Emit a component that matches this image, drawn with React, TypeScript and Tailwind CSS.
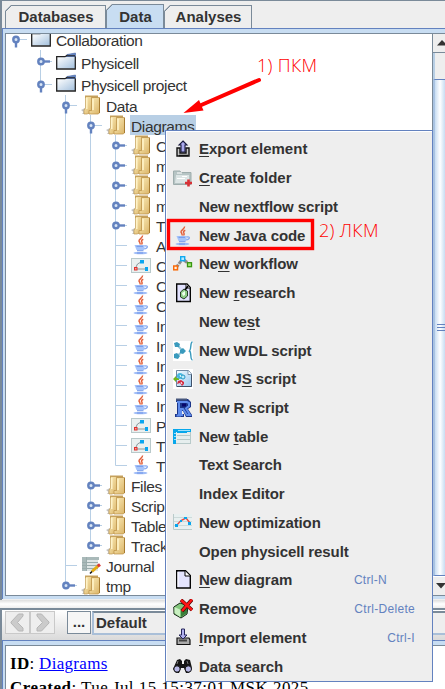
import type { ReactNode } from "react";

const LINE = "#b8cfe5";
const BLUE = "#6382bf";

type IconName =
  | "folder" | "yellow" | "java" | "diagram" | "journal" | "export" | "createFolder" | "workflow"
  | "research" | "wdl" | "js" | "r" | "table" | "optimization" | "page" | "remove" | "import" | "search";

const art: Record<IconName, ReactNode> = {
  folder: (
    <g>
      <path d="M10 5 L11 2.5 L19.5 1 V5Z" fill="#6382bf" stroke="#4d6ba8" strokeWidth=".6" />
      <rect x="1" y="5" width="18" height="11.5" fill="url(#fold)" />
      <path d="M19.3 4.5 V17 H.7 V4.7 H9 L11 3.5 H19" fill="none" stroke="#222" strokeWidth="1.3" />
      <path d="M11.5 2.4 L19.5 1.2 V3.2 H11Z" fill="#6382bf" />
    </g>
  ),
  yellow: (
    <g>
      <path d="M0 15 L4 13 V19 H1 L2.5 17Z" fill="#c4c4c4" />
      <path d="M4 .5 H17 V3 H4Z" fill="#c5a05c" />
      <path d="M4.5 1.5 H11 V17 L6 19 H3 V15 L4.5 13Z" fill="url(#gold)" stroke="#bd954d" strokeWidth=".7" />
      <path d="M10.5 2.5 H18.5 V18 L17 19 H8 V15.5 H10.5Z" fill="url(#gold)" stroke="#b98e44" strokeWidth=".7" />
      <path d="M5.7 3 V14 M12 4 V15" stroke="#fff3c8" strokeWidth="1.6" />
      <path d="M18.5 3 V18" stroke="#a77c32" />
    </g>
  ),
  java: (
    <g fill="none">
      <path d="M11.5 .5 C12 3 7.5 4 8 6 C8.3 7.2 9.7 8 9 9.5 M12.3 4.3 C10.5 5 10 6 11 7.3 C11.4 8.3 11 9 10.5 9.5" stroke="#e2603c" strokeWidth="1.5" />
      <path d="M3.5 10 H14 L13 15 H5.5Z" fill="#a5c3fa" />
      <path d="M14 11 C17.5 10 17 13.7 13.2 13.7" stroke="#8aacf0" strokeWidth="1.4" />
      <path d="M5.5 11.3 H12 M6 15.7 H12.5" stroke="#7196e8" strokeWidth="1" />
      <ellipse cx="9.5" cy="18" rx="7" ry="1.3" fill="#a0bdf7" />
      <path d="M6 18 H12" stroke="#7196e8" />
    </g>
  ),
  diagram: (
    <g>
      <rect x=".5" y="3.5" width="19" height="14" fill="#e9f0f0" stroke="#b9c9ca" />
      <path d="M4.5 13 L6.5 9 L10 7 M5 14 H15" fill="none" stroke="#87989b" />
      <path d="M9 5 H13 V8.5 H9Z M14 12 H17 V16 H14Z" fill="#08a5ef" />
      <rect x="3.5" y="12.5" width="2.5" height="2.5" fill="#f7a29b" stroke="#e0302d" />
    </g>
  ),
  journal: (
    <g>
      <path d="M1 2 H17 V16 H1Z" fill="#dfe6e6" />
      <path d="M1 2 H18 V5 H1Z M1 5 H5 V16 H1Z" fill="#a9b9b9" />
      <path d="M1 7.5 H17 M1 10.5 H17 M1 13.5 H17 M5.5 2 V16" stroke="#9aacac" />
      <path d="M11 16.5 L17 11" stroke="#e3ab12" strokeWidth="3" />
      <path d="M16.7 11.3 L19 9.5" stroke="#d83b37" strokeWidth="3" />
      <path d="M9 18.5 L11 16.5" stroke="#111" strokeWidth="1.6" />
    </g>
  ),
  export: (
    <g>
      <path d="M4 9 H7 V14 H13 V9 H16 V17 H4Z" fill="#c5c5c5" stroke="#111" strokeWidth="1.4" />
      <path d="M10 2 L14 6 H12 V13 H8 V6 H6Z" fill="#a9a9ec" stroke="#17173c" strokeWidth="1.1" />
      <path d="M6 16.5 H15" stroke="#111" strokeWidth="1.5" />
    </g>
  ),
  createFolder: (
    <g>
      <path d="M.5 3 H7 L8 4.5 H18 V16.5 H.5Z" fill="#b6c4c4" stroke="#9eadad" />
      <path d="M3 7 H16 V15 H2Z" fill="#dce5e5" />
      <path d="M4 5 H9 M9 8.5 H14 M4 10.5 H12" stroke="#fff" />
      <path d="M15.5 11.5 V18.5 M12 15 H19" stroke="#d83035" strokeWidth="2.6" />
    </g>
  ),
  workflow: (
    <g>
      <path d="M3 14 L8 7 M11 6 L16 10" stroke="#8c8c8c" strokeWidth="3" strokeDasharray="4 1" />
      <rect x="7.7" y="2.7" width="4" height="4" fill="#b9eafe" stroke="#10aaf1" strokeWidth="1.4" />
      <rect x=".7" y="12" width="3.8" height="3.8" fill="#fff0df" stroke="#fa6a08" strokeWidth="1.5" />
      <rect x="14.5" y="8.7" width="4" height="4" fill="#a5e77c" stroke="#38960f" strokeWidth="1.3" />
    </g>
  ),
  research: (
    <g>
      <path d="M3.7 1 H14 L17.3 4.5 V18.5 H3.7Z" fill="#e2e2ff" stroke="#050505" strokeWidth="1.4" />
      <path d="M13 1 V5 H17" fill="#fff" stroke="#111" />
      <path d="M7.5 9 L11 6 L14.5 8 V13 L11 16 L7.5 14Z" fill="#8dcc88" stroke="#1a301b" strokeWidth=".9" />
      <path d="M9 10 L12 8 V12 L10 13Z" fill="#effff0" />
      <path d="M12 7 L15 3" stroke="#000" strokeWidth="1.5" />
    </g>
  ),
  wdl: (
    <g>
      <rect width="20" height="20" fill="#fff" />
      <path d="M4 4 L10 10 L4 15" fill="none" stroke="#91c5d8" strokeWidth="2" />
      <path d="M1 2 L4 1 L7 3 L6 6 L2 6Z M7 9 L10 7 L13 10 L10 13 L7 12Z M1 13 L4 12 L7 15 L5 18 L1 17Z" fill="#399abd" />
      <path d="M19.5 1 C16.8 1 18.8 8 16.5 10 C18.8 11 16.8 19 19.5 19" fill="none" stroke="#399abd" strokeWidth="1.4" />
    </g>
  ),
  js: (
    <g>
      <rect width="20" height="20" fill="#fff" />
      <path d="M3.5 1.5 H15.5 L18.5 5 V17.5 H3.5Z" fill="url(#sky)" stroke="#6e87a3" />
      <path d="M4 17.5 H18.5 V5" fill="none" stroke="#3f5169" />
      <path d="M15 1.5 V5.5 H18.5" fill="#fff" stroke="#66819d" strokeWidth=".8" />
      <path d="M0 10 L3 7 V9 H6 V11 H3 V13Z" fill="#73b51b" />
      <circle cx="7" cy="7" r="3" fill="#45b7dd" /><circle cx="10" cy="8" r="2" fill="#b6ecfa" stroke="#2595c6" />
      <path d="M5 12 L8 11 L11 13 V15 L9 17 L7 14 L4 15Z" fill="#d52e44" />
      <path d="M7 6 L8 8 M8 13 L9 15" stroke="white" />
    </g>
  ),
  r: (
    <g>
      <path d="M3 1 H15 L18 4 V9 L15 11 L19 17 V19 H13 L10 13 H9 V16 H11 V19 H2 V16 H4 V4 H3Z" fill="#1c3588" />
      <path d="M4 4 H14 L16 5 V8 L13 10.5 L17 17 H14 L10 11 H8 V17 H10 M3.5 17.5 H8 M6 4 V17" fill="none" stroke="#5f8cec" strokeWidth="2" />
      <path d="M9 5.5 H13 V8.5 H9Z" fill="#06066b" />
      <path d="M3 1.5 H14" stroke="#46567c" strokeWidth="2" />
    </g>
  ),
  table: (
    <g>
      <rect x=".5" y="2.5" width="17" height="14" fill="#e6eeee" stroke="#b8caca" />
      <path d="M4 8.5 H18 M4 12.5 H18 M4 16.5 H18" stroke="#b7c9c9" />
      <path d="M0 2 H18 V5 H0Z M0 5 H3 V17 H0Z" fill="#07a7eb" />
      <path d="M1 6.5 H3 M1 9.5 H3 M1 12.5 H3 M5 3.5 H17" stroke="#9de0fa" />
      <path d="M4 5.5 H14" stroke="#07a7eb" />
    </g>
  ),
  optimization: (
    <g>
      <rect y="1" width="19" height="16" fill="#e8f0f0" />
      <path d="M.5 1 V16.5 H19" fill="none" stroke="#bacaca" />
      <path d="M1 4.5 H19 M1 8.5 H19 M1 12.5 H19" stroke="#cddada" />
      <path d="M3 13 L8 7.5 L13 5 L17 10" fill="none" stroke="#e44d46" strokeWidth="1.4" />
      <path d="M2 11 H5 V14 H2Z M7 7 H9 V9 H7Z M11 4 H14 V6 H11Z M15 9 H18 V12 H15Z" fill="#08a5ed" />
    </g>
  ),
  page: (
    <g>
      <path d="M3.7 .7 H12.5 L17.3 5.5 V18 H3.7Z" fill="#e4e4fe" stroke="#050505" strokeWidth="1.4" />
      <path d="M5 2 V17" stroke="#fff" /><path d="M12 1 V6 H17" fill="#fff" stroke="#050505" />
    </g>
  ),
  remove: (
    <g>
      <path d="M.8 8 L7 4 L15 7 L14 15 L8 19 L1 15Z" fill="#83c77c" stroke="#172817" />
      <path d="M1.5 8 L7 10.5 V18 L1.5 14Z" fill="#c9f0c1" />
      <path d="M8 11 L14 8 V14 L8 18Z" fill="#397e39" />
      <path d="M8 1 L19 11 M19 .5 L9 12" stroke="#4c0505" strokeWidth="3.7" />
      <path d="M8 1 L19 11 M19 .5 L9 12" stroke="#ff1414" strokeWidth="2.4" />
    </g>
  ),
  import: (
    <g>
      <path d="M4 10 H16 L17 12 V16.5 H4Z" fill="#aaa" stroke="#111" strokeWidth="1.2" />
      <path d="M6 12.5 H14" stroke="#444" strokeWidth="2" />
      <path d="M8.5 1 H11.5 V7 H14 L10 11 L6 7 H8.5Z" fill="#b0b0ee" stroke="#25255b" />
    </g>
  ),
  search: (
    <g>
      <path d="M4 3 L7 2 L9 4 V7 H11 V4 L13 2 L17 3 L19 11 L16 16 H13 L11 11 H8 L6 16 H3 L0 12Z" fill="#151515" />
      <circle cx="4" cy="12" r="3.2" fill="#b7b7e6" stroke="#111" /><circle cx="15.3" cy="12" r="3.2" fill="#b7b7e6" stroke="#111" />
      <path d="M5 4 L4 7 M14 4 L15 7" stroke="#777" />
    </g>
  ),
};

function Icon({ name }: { name: IconName }) {
  return <svg width="20" height="20" viewBox="0 0 20 20" className="block shrink-0">{art[name]}</svg>;
}

type Cell = "blank" | "pass" | "open" | "closed" | "leaf";

function Gutter({ kind, h, first, last }: { kind: Cell; h: number; first?: boolean; last?: boolean }) {
  const c = Math.floor(h / 2) + 0.5;
  return (
    <svg width="25" height={h} className="block shrink-0">
      {kind === "pass" && <path d={`M12.5 0V${h}`} stroke={LINE} />}
      {kind !== "pass" && kind !== "blank" && (
        <path d={`M12.5 ${first ? c : 0}V${last ? c : h}M12.5 ${c}H24`} stroke={LINE} fill="none" />
      )}
      {kind === "open" && <path d={`M13 ${c}V${c + 8}`} stroke={BLUE} strokeWidth="2.4" />}
      {kind === "closed" && <path d={`M13 ${c}H22`} stroke={BLUE} strokeWidth="2.4" />}
      {(kind === "open" || kind === "closed") && <circle cx="13" cy={c} r="2.7" fill="#d9e6f5" stroke={BLUE} strokeWidth="2.4" />}
    </svg>
  );
}

type Node = { d: number; kind: Cell; icon: IconName; label: string; last?: boolean; sel?: boolean };

const nodes: Node[] = [
  { d: 0, kind: "open", icon: "folder", label: "Collaboration", last: true },
  { d: 1, kind: "closed", icon: "folder", label: "Physicell" },
  { d: 1, kind: "open", icon: "folder", label: "Physicell project", last: true },
  { d: 2, kind: "open", icon: "yellow", label: "Data" },
  { d: 3, kind: "open", icon: "yellow", label: "Diagrams", sel: true },
  { d: 4, kind: "closed", icon: "yellow", label: "C" },
  { d: 4, kind: "closed", icon: "yellow", label: "m" },
  { d: 4, kind: "closed", icon: "yellow", label: "m" },
  { d: 4, kind: "closed", icon: "yellow", label: "m" },
  { d: 4, kind: "closed", icon: "yellow", label: "T" },
  { d: 4, kind: "leaf", icon: "java", label: "A" },
  { d: 4, kind: "leaf", icon: "diagram", label: "C" },
  { d: 4, kind: "leaf", icon: "java", label: "C" },
  { d: 4, kind: "leaf", icon: "java", label: "C" },
  { d: 4, kind: "leaf", icon: "java", label: "In" },
  { d: 4, kind: "leaf", icon: "java", label: "In" },
  { d: 4, kind: "leaf", icon: "java", label: "In" },
  { d: 4, kind: "leaf", icon: "java", label: "In" },
  { d: 4, kind: "leaf", icon: "java", label: "In" },
  { d: 4, kind: "leaf", icon: "diagram", label: "P" },
  { d: 4, kind: "leaf", icon: "diagram", label: "T" },
  { d: 4, kind: "leaf", icon: "java", label: "T", last: true },
  { d: 3, kind: "closed", icon: "yellow", label: "Files" },
  { d: 3, kind: "closed", icon: "yellow", label: "Scrip" },
  { d: 3, kind: "closed", icon: "yellow", label: "Table" },
  { d: 3, kind: "closed", icon: "yellow", label: "Track", last: true },
  { d: 2, kind: "leaf", icon: "journal", label: "Journal" },
  { d: 2, kind: "closed", icon: "yellow", label: "tmp", last: true },
];

function TreeRow({ n, i }: { n: Node; i: number }) {
  const h = i === 0 ? 22 : i === 1 ? 23 : i === 2 ? 22 : 20;
  return (
    <div className="flex shrink-0 items-center">
      {Array.from({ length: n.d }, (_, k) => (
        <Gutter key={k} kind={k < 2 ? "blank" : "pass"} h={h} />
      ))}
      <Gutter kind={n.kind} h={h} first={i === 0} last={n.last} />
      <span className="w-[3px] shrink-0" />
      <Icon name={n.icon} />
      <span className={`ml-1 h-5 whitespace-nowrap pl-px pr-0.5 text-[15.5px] leading-[23px] tracking-[-0.37px] text-[#333] ${n.sel ? "bg-[#b8cfe5]" : ""}`}>
        {n.label}
      </span>
    </div>
  );
}

type Item = { icon?: IconName; a?: string; u?: string; b?: string; key?: string };

const items: Item[] = [
  { icon: "export", u: "E", b: "xport element" },
  { icon: "createFolder", u: "C", b: "reate folder" },
  { a: "New nextflow script" },
  { icon: "java", a: "New Java code" },
  { icon: "workflow", a: "Ne", u: "w", b: " workflow" },
  { icon: "research", a: "New ", u: "r", b: "esearch" },
  { a: "New te", u: "s", b: "t" },
  { icon: "wdl", a: "New WDL script" },
  { icon: "js", a: "New J", u: "S", b: " script" },
  { icon: "r", a: "New R script" },
  { icon: "table", a: "New ", u: "t", b: "able" },
  { a: "Text Search" },
  { a: "Index Editor" },
  { icon: "optimization", a: "New optimization" },
  { a: "Open physicell result" },
  { icon: "page", u: "N", b: "ew diagram", key: "Ctrl-N" },
  { icon: "remove", a: "Remove", key: "Ctrl-Delete" },
  { icon: "import", u: "I", b: "mport element", key: "Ctrl-I" },
  { icon: "search", a: "Data search" },
];

function ContextMenu() {
  return (
    <div className="absolute left-[165px] top-[130px] grid h-[552px] w-[268px] grid-rows-[repeat(19,minmax(0,1fr))] border border-[#6382bf] bg-[#eee] pt-1 shadow-[inset_1px_1px_0_#fff]">
      {items.map((it, i) => (
        <div key={i} className="flex items-center pl-[7px]">
          <span className="w-[26px] shrink-0">{it.icon && <Icon name={it.icon} />}</span>
          <span className={`whitespace-pre text-[15px] font-bold leading-5 text-[#333] ${it.a ? "tracking-[-0.1px]" : ""}`}>
            {it.a}
            {it.u && <span className="underline decoration-1 underline-offset-2">{it.u}</span>}
            {it.b}
          </span>
          {it.key && (
            <span className={`ml-auto text-[12px] tracking-[0.3px] text-[#6382bf] ${it.key === "Ctrl-N" ? "pr-[45px]" : "pr-[17px]"}`}>
              {it.key}
            </span>
          )}
        </div>
      ))}
    </div>
  );
}

function Tab({ label, active, className }: { label: string; active?: boolean; className: string }) {
  return (
    <div
      className={`flex items-center justify-center border-l border-r border-t border-[#7a8a99] pl-px pt-px text-[15px] font-bold text-[#333] [clip-path:polygon(6px_0,100%_0,100%_100%,0_100%,0_6px)] ${active ? "bg-[linear-gradient(135deg,#7a8a99_3.8px,#c8ddf2_3.8px)]" : "bg-[linear-gradient(135deg,#7a8a99_3.8px,#eee_3.8px)]"} ${className}`}
    >
      {label}
    </div>
  );
}

function ScrollBar() {
  return (
    <div className="flex w-[13px] shrink-0 flex-col border-l border-[#7a8a99] bg-[#eee]">
      <div className="flex h-[19px] items-center justify-end border-b border-[#7a8a99]">
        <svg width="8" height="6" className="block"><path d="M0 5.5L5 0L9 4V5.5Z" fill="#333" /></svg>
      </div>
      <div className="h-[27px] border-b border-l-2 border-[#6382bf] border-l-[#b8cfe5]" />
      <div className="flex flex-1 items-center justify-end border-b border-l-2 border-[#6382bf] border-l-[#a9c3e2] bg-linear-to-r from-[#c8ddf2] via-white to-[#c8ddf2]">
        <div className="flex h-[7px] w-2 flex-col justify-between">
          <span className="h-px bg-[#6382bf]" />
          <span className="h-px bg-[#6382bf]" />
          <span className="h-px bg-[#6382bf]" />
        </div>
      </div>
      <div className="flex h-[19px] items-center justify-end border-t border-white">
        <svg width="9" height="6" className="block"><path d="M0 0H9V1L5 5.5Z" fill="#333" /></svg>
      </div>
    </div>
  );
}

function NavButton({ flip }: { flip?: boolean }) {
  return (
    <div className="flex h-[23px] w-[25px] items-center justify-center border border-[#c9c9c9] bg-[#eee]">
      <svg width="15" height="19" viewBox="0 0 15 19" className={flip ? "-scale-x-100" : ""}>
        <path d="M8.5 1H13V3L7.5 9.5L13 15V18H8.5L1 10V9Z" fill="#cbcbcb" stroke="#b6b6b6" />
      </svg>
    </div>
  );
}

export default function App() {
  return (
    <div className="relative flex h-[689px] w-[445px] flex-col overflow-hidden bg-[#eee] font-['Liberation_Sans',Arial,sans-serif]">
      <svg width="0" height="0" className="absolute">
        <defs>
          <linearGradient id="fold" x2="1" y2="1"><stop stopColor="#fff" /><stop offset="1" stopColor="#a3c0dd" /></linearGradient>
          <linearGradient id="gold" x2="1" y2="1"><stop stopColor="#fdeebb" /><stop offset="1" stopColor="#dab468" /></linearGradient>
          <linearGradient id="sky" x2="1" y2="1"><stop stopColor="#f4fbff" /><stop offset="1" stopColor="#9bc8ef" /></linearGradient>
        </defs>
      </svg>

      <div className="flex h-[600px] shrink-0 flex-col border-l-2 border-t border-[#7a8a99]">
        <div className="flex h-[27px] shrink-0 items-end pl-[3px]">
          <Tab label="Databases" className="h-[23px] w-[101px]" />
          <Tab label="Data" active className="h-[24px] w-[58px]" />
          <Tab label="Analyses" className="h-[23px] w-[88px]" />
        </div>
        <div className="flex h-[571px] shrink-0 flex-col border-l border-t border-[#6382bf] bg-[#c8ddf2] pl-0.5 pt-1">
          <div className="flex h-[563px] shrink-0 overflow-hidden border-b border-l border-t border-[#7a8a99] bg-white">
            <div className="-ml-[3px] -mt-[6px] flex flex-1 flex-col overflow-hidden">
              {nodes.map((n, i) => <TreeRow key={i} n={n} i={i} />)}
            </div>
            <ScrollBar />
          </div>
        </div>
      </div>

      <div className="h-2 shrink-0 bg-linear-to-b from-[#dedede] via-white to-[#eee]" />
      <div className="flex h-[81px] shrink-0 flex-col border-l-2 border-t-2 border-[#7a8a99]">
        <div className="flex h-[30px] shrink-0 items-start bg-linear-to-b from-white to-[#dadada] pl-[3px] pt-px">
          <NavButton />
          <NavButton flip />
          <div className="ml-3 flex h-[23px] w-6 items-center justify-center border border-[#7a8a99] bg-[#f6f6f6] text-[15px] font-bold text-[#333]">...</div>
          <div className="ml-px flex h-6 flex-1 items-center border-y-2 border-l-2 border-[#a9bfd8] border-t-[#7a8a99] bg-[#eee] pl-0.5 text-[15px] font-bold text-[#333]">Default</div>
        </div>
        <div className="flex flex-1 border-l border-t border-[#6382bf] bg-[#c8ddf2] pl-0.5 pt-1">
          <div className="flex-1 border-l border-t border-[#7a8a99] bg-white pl-1 pt-[6px] font-['Liberation_Serif','Times_New_Roman',serif] text-[17px] leading-6 text-black">
            <div className="whitespace-nowrap tracking-[0.3px]"><b>ID</b>: <span className="text-[#0000ff] underline">Diagrams</span></div>
            <div className="whitespace-nowrap tracking-[0.45px]"><b>Created</b>: Tue Jul 15 15:37:01 MSK 2025</div>
          </div>
        </div>
      </div>

      <ContextMenu />

      <svg width="445" height="689" className="pointer-events-none absolute inset-0">
        <path d="M259 80L199 106" stroke="#f00" strokeWidth="4" strokeLinecap="round" />
        <path d="M183.5 113L199 100L203.5 110.5Z" fill="#f00" />
        <rect x="168.5" y="220.5" width="144" height="28" fill="none" stroke="#f00" strokeWidth="3.4" />
      </svg>
      <span className="absolute left-[257px] top-[53px] whitespace-nowrap font-['Open_Sans',sans-serif] text-[18px] font-light leading-6 tracking-[0.3px] text-[#f00]">1) ПКМ</span>
      <span className="absolute left-[319px] top-[218px] whitespace-nowrap font-['Open_Sans',sans-serif] text-[18px] font-light leading-6 tracking-[0.3px] text-[#f00]">2) ЛКМ</span>
    </div>
  );
}
